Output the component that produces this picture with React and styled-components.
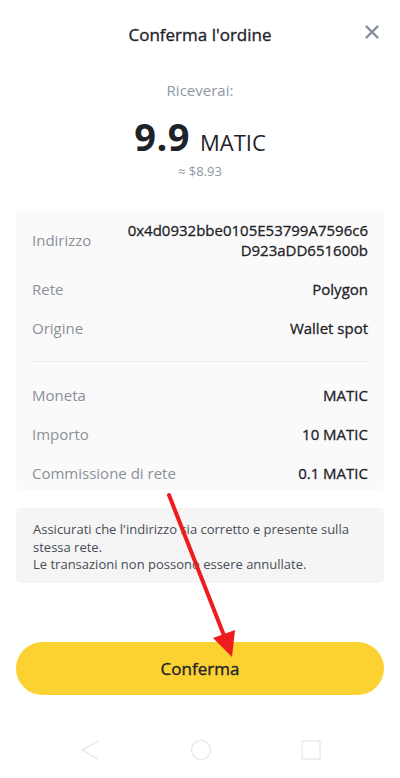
import React from 'react'
import styled, { createGlobalStyle } from 'styled-components'

const details = [
  { label: 'Indirizzo', value: ['0x4d0932bbe0105E53799A7596c6', 'D923aDD651600b'] },
  { label: 'Rete', value: ['Polygon'] },
  { label: 'Origine', value: ['Wallet spot'] },
]

const amounts = [
  { label: 'Moneta', value: 'MATIC' },
  { label: 'Importo', value: '10 MATIC' },
  { label: 'Commissione di rete', value: '0.1 MATIC' },
]

export default function App() {
  return (
    <Page>
      <GlobalStyle />
      <Header>
        <Title>Conferma l'ordine</Title>
        <Close aria-label="chiudi">
          <svg width="14" height="14" viewBox="0 0 14 14">
            <path d="M1.5 1.5 L12.5 12.5 M12.5 1.5 L1.5 12.5" stroke="#848e9c" strokeWidth="2.4" strokeLinecap="round" />
          </svg>
        </Close>
      </Header>

      <Receive>Riceverai:</Receive>
      <Amount>
        <Big>9.9</Big>
        <Unit>MATIC</Unit>
      </Amount>
      <Fiat>≈ $8.93</Fiat>

      <Card>
        <Group>
          {details.map(d => (
            <Row key={d.label}>
              <Label>{d.label}</Label>
              <Value>
                {d.value.map(line => <span key={line}>{line}</span>)}
              </Value>
            </Row>
          ))}
        </Group>
        <Divider />
        <Group>
          {amounts.map(a => (
            <Row key={a.label}>
              <Label>{a.label}</Label>
              <Value>{a.value}</Value>
            </Row>
          ))}
        </Group>
      </Card>

      <Notice>
        Assicurati che l'indirizzo sia corretto e presente sulla stessa rete.<br />
        Le transazioni non possono essere annullate.
      </Notice>

      <ConfirmButton>Conferma</ConfirmButton>

      <NavBar>
        <svg width="20" height="22" viewBox="0 0 20 22">
          <path d="M18 2 L2 11 L18 20" fill="none" stroke="#e6e6e6" strokeWidth="1.2" />
        </svg>
        <svg width="22" height="22" viewBox="0 0 22 22">
          <circle cx="11" cy="11" r="9.5" fill="none" stroke="#e6e6e6" strokeWidth="1.2" />
        </svg>
        <svg width="20" height="20" viewBox="0 0 20 20">
          <rect x="1" y="1" width="18" height="18" fill="none" stroke="#e6e6e6" strokeWidth="1.2" />
        </svg>
      </NavBar>

      <Arrow width="400" height="778" viewBox="0 0 400 778">
        <line x1="169" y1="495" x2="225" y2="638" stroke="#ee1c1c" strokeWidth="4" strokeLinecap="round" />
        <polygon points="232,657 213,638 235,630" fill="#ee1c1c" />
      </Arrow>
    </Page>
  )
}

const GlobalStyle = createGlobalStyle`
  body {
    margin: 0;
    background: #fff;
    font-family: "Open Sans", "Noto Sans", sans-serif;
    color: #1e2329;
  }
`;

const Page = styled.div`
  position: relative;
  width: 400px;
  height: 778px;
  overflow: hidden;
  display: flex;
  flex-direction: column;
  align-items: stretch;
  padding: 0 16px;
  box-sizing: border-box;
`;

const Header = styled.div`
  position: relative;
  height: 68px;
  display: flex;
  align-items: center;
  justify-content: center;
`;

const Title = styled.h1`
  margin: 0;
  font-size: 17px;
  font-weight: 400;
  -webkit-text-stroke: 0.35px #1e2329;
  color: #1e2329;
`;

const Close = styled.div`
  position: absolute;
  right: 5px;
  top: 25px;
  width: 14px;
  height: 14px;
  display: flex;
`;

const Receive = styled.div`
  margin-top: 12px;
  text-align: center;
  font-size: 15px;
  line-height: 20px;
  color: #9098a2;
`;

const Amount = styled.div`
  margin-top: 12px;
  display: flex;
  justify-content: center;
  align-items: baseline;
  gap: 10px;
  height: 48px;
  line-height: 48px;
`;

const Big = styled.span`
  font-size: 38px;
  font-weight: 700;
  letter-spacing: 0.5px;
  color: #1e2329;
`;

const Unit = styled.span`
  font-size: 22px;
  font-weight: 400;
  color: #1e2329;
`;

const Fiat = styled.div`
  margin-top: 3px;
  text-align: center;
  font-size: 13px;
  line-height: 16px;
  color: #9098a2;
`;

const Card = styled.div`
  margin-top: 30px;
  background: #fafafa;
  border-radius: 6px;
  padding: 11px 16px 7px;
`;

const Group = styled.div`
  display: flex;
  flex-direction: column;
  gap: 19px;
`;

const Row = styled.div`
  display: flex;
  justify-content: space-between;
  align-items: center;
  font-size: 15px;
  line-height: 20px;
`;

const Label = styled.span`
  color: #8a9099;
`;

const Value = styled.span`
  display: flex;
  flex-direction: column;
  align-items: flex-end;
  color: #1e2329;
  -webkit-text-stroke: 0.3px #1e2329;
`;

const Divider = styled.div`
  height: 1px;
  background: #ececec;
  margin: 23px 0 23px;
`;

const Notice = styled.div`
  margin-top: 18px;
  background: #f5f5f5;
  border-radius: 5px;
  padding: 13px 16px 9px 17px;
  font-size: 13px;
  line-height: 17.5px;
  color: #474d57;
`;

const ConfirmButton = styled.button`
  margin-top: 59px;
  height: 53px;
  border: none;
  border-radius: 27px;
  background: #fcd232;
  font-family: inherit;
  font-size: 17px;
  font-weight: 400;
  -webkit-text-stroke: 0.35px #1e2329;
  color: #1e2329;
`;

const NavBar = styled.div`
  margin-top: 44px;
  display: flex;
  justify-content: space-between;
  align-items: center;
  padding: 0 63px 0 64px;
`;

const Arrow = styled.svg`
  position: absolute;
  left: 0;
  top: 0;
  pointer-events: none;
`;
